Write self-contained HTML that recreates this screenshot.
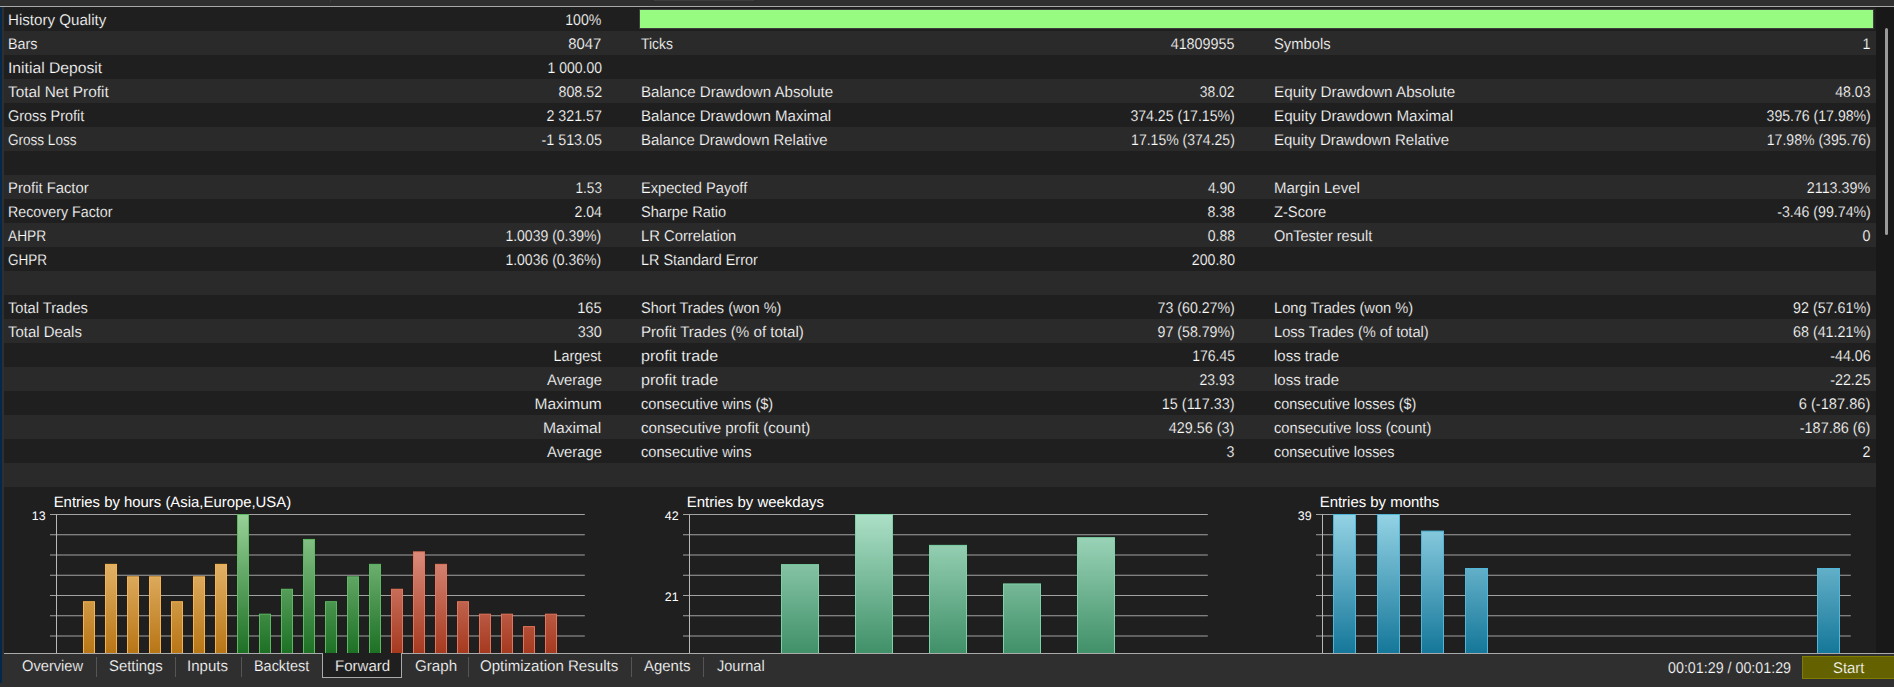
<!DOCTYPE html>
<html lang="en"><head><meta charset="utf-8"><title>Strategy Tester - Forward</title>
<style>
html,body{margin:0;padding:0;background:#2f2f2f;}
body{width:1894px;height:687px;position:relative;overflow:hidden;font-family:"Liberation Sans",Arial,sans-serif;font-size:15.4px;color:#fff;text-rendering:geometricPrecision;}
.abs{position:absolute;}
.row{position:absolute;left:4px;width:1872px;height:24px;}
.t{position:absolute;white-space:pre;transform-origin:0 0;line-height:24px;height:24px;top:2px;}
.v{transform-origin:100% 0;}
.tab{position:absolute;transform-origin:0 0;-webkit-text-stroke:0.2px #2f2f2f;top:655px;height:24px;line-height:24px;white-space:pre;}
.sep{position:absolute;top:657px;width:1px;height:20px;background:#555;}
svg text{font-family:"Liberation Sans",Arial,sans-serif;fill:#fff;}
</style></head><body>

<div class="abs" style="left:0;top:0;width:1894px;height:6px;background:#2f2f2f"></div>
<div class="abs" style="left:654px;top:0;width:100px;height:1px;background:#3e3e3e"></div>
<div class="abs" style="left:330px;top:0;width:1px;height:2px;background:#3c3c3c"></div>
<div class="abs" style="left:0;top:6px;width:1894px;height:1px;background:#a8a8a8"></div>
<div class="abs" style="left:0;top:7px;width:2px;height:676px;background:#04284a"></div>
<div class="abs" style="left:2px;top:7px;width:2px;height:646px;background:#2f2f2f"></div>
<div class="abs" style="left:4px;top:7px;width:1872px;height:646px;background:#1f1f1f"></div>
<div class="abs" style="left:1876px;top:7px;width:18px;height:646px;background:#181818"></div>
<div class="abs" style="left:1885px;top:28px;width:3px;height:207px;background:#9a9a9a;border-radius:1.5px"></div>
<div class="row" style="top:7px;background:#1f1f1f;-webkit-text-stroke:0.2px #1f1f1f">
<span class="t" id="t0_0" style="left:3.7px;transform:scaleX(0.9823)">History Quality</span>
<span class="t v" id="t0_1" style="right:1274.3px;transform:scaleX(0.9175)">100%</span>
<div class="abs" style="left:635px;top:2px;width:1235px;height:20px;background:#3e3e3e"></div>
<div class="abs" style="left:636px;top:3px;width:1233px;height:18px;background:#96fb80"></div>
</div>
<div class="row" style="top:31px;background:#2a2a2a;-webkit-text-stroke:0.2px #2a2a2a">
<span class="t" id="t1_0" style="left:3.7px;transform:scaleX(0.9295)">Bars</span>
<span class="t v" id="t1_1" style="right:1274.3px;transform:scaleX(0.9621)">8047</span>
<span class="t" id="t1_2" style="left:636.7px;transform:scaleX(0.9043)">Ticks</span>
<span class="t v" id="t1_3" style="right:641.4px;transform:scaleX(0.9319)">41809955</span>
<span class="t" id="t1_4" style="left:1269.7px;transform:scaleX(0.9585)">Symbols</span>
<span class="t v" id="t1_5" style="right:5.5px;transform:scaleX(0.9300)">1</span>
</div>
<div class="row" style="top:55px;background:#1f1f1f;-webkit-text-stroke:0.2px #1f1f1f">
<span class="t" id="t2_0" style="left:3.7px;transform:scaleX(1.0193)">Initial Deposit</span>
<span class="t v" id="t2_1" style="right:1274.3px;transform:scaleX(0.9070)">1 000.00</span>
</div>
<div class="row" style="top:79px;background:#2a2a2a;-webkit-text-stroke:0.2px #2a2a2a">
<span class="t" id="t3_0" style="left:3.7px;transform:scaleX(0.9975)">Total Net Profit</span>
<span class="t v" id="t3_1" style="right:1274.3px;transform:scaleX(0.9257)">808.52</span>
<span class="t" id="t3_2" style="left:636.7px;transform:scaleX(0.9808)">Balance Drawdown Absolute</span>
<span class="t v" id="t3_3" style="right:641.4px;transform:scaleX(0.9020)">38.02</span>
<span class="t" id="t3_4" style="left:1269.7px;transform:scaleX(0.9901)">Equity Drawdown Absolute</span>
<span class="t v" id="t3_5" style="right:5.5px;transform:scaleX(0.9159)">48.03</span>
</div>
<div class="row" style="top:103px;background:#1f1f1f;-webkit-text-stroke:0.2px #1f1f1f">
<span class="t" id="t4_0" style="left:3.7px;transform:scaleX(0.9396)">Gross Profit</span>
<span class="t v" id="t4_1" style="right:1274.3px;transform:scaleX(0.9256)">2 321.57</span>
<span class="t" id="t4_2" style="left:636.7px;transform:scaleX(0.9792)">Balance Drawdown Maximal</span>
<span class="t v" id="t4_3" style="right:641.4px;transform:scaleX(0.9176)">374.25 (17.15%)</span>
<span class="t" id="t4_4" style="left:1269.7px;transform:scaleX(0.9872)">Equity Drawdown Maximal</span>
<span class="t v" id="t4_5" style="right:5.5px;transform:scaleX(0.9162)">395.76 (17.98%)</span>
</div>
<div class="row" style="top:127px;background:#2a2a2a;-webkit-text-stroke:0.2px #2a2a2a">
<span class="t" id="t5_0" style="left:3.7px;transform:scaleX(0.8796)">Gross Loss</span>
<span class="t v" id="t5_1" style="right:1274.3px;transform:scaleX(0.9319)">-1 513.05</span>
<span class="t" id="t5_2" style="left:636.7px;transform:scaleX(0.9685)">Balance Drawdown Relative</span>
<span class="t v" id="t5_3" style="right:641.4px;transform:scaleX(0.9114)">17.15% (374.25)</span>
<span class="t" id="t5_4" style="left:1269.7px;transform:scaleX(0.9751)">Equity Drawdown Relative</span>
<span class="t v" id="t5_5" style="right:5.5px;transform:scaleX(0.9141)">17.98% (395.76)</span>
</div>
<div class="row" style="top:151px;background:#1f1f1f;-webkit-text-stroke:0.2px #1f1f1f">
</div>
<div class="row" style="top:175px;background:#2a2a2a;-webkit-text-stroke:0.2px #2a2a2a">
<span class="t" id="t7_0" style="left:3.7px;transform:scaleX(0.9623)">Profit Factor</span>
<span class="t v" id="t7_1" style="right:1274.3px;transform:scaleX(0.8850)">1.53</span>
<span class="t" id="t7_2" style="left:636.7px;transform:scaleX(0.9502)">Expected Payoff</span>
<span class="t v" id="t7_3" style="right:641.4px;transform:scaleX(0.9035)">4.90</span>
<span class="t" id="t7_4" style="left:1269.7px;transform:scaleX(0.9743)">Margin Level</span>
<span class="t v" id="t7_5" style="right:5.5px;transform:scaleX(0.9296)">2113.39%</span>
</div>
<div class="row" style="top:199px;background:#1f1f1f;-webkit-text-stroke:0.2px #1f1f1f">
<span class="t" id="t8_0" style="left:3.7px;transform:scaleX(0.9252)">Recovery Factor</span>
<span class="t v" id="t8_1" style="right:1274.3px;transform:scaleX(0.9149)">2.04</span>
<span class="t" id="t8_2" style="left:636.7px;transform:scaleX(0.9487)">Sharpe Ratio</span>
<span class="t v" id="t8_3" style="right:641.4px;transform:scaleX(0.9178)">8.38</span>
<span class="t" id="t8_4" style="left:1269.7px;transform:scaleX(0.9533)">Z-Score</span>
<span class="t v" id="t8_5" style="right:5.5px;transform:scaleX(0.9197)">-3.46 (99.74%)</span>
</div>
<div class="row" style="top:223px;background:#2a2a2a;-webkit-text-stroke:0.2px #2a2a2a">
<span class="t" id="t9_0" style="left:3.7px;transform:scaleX(0.8929)">AHPR</span>
<span class="t v" id="t9_1" style="right:1274.3px;transform:scaleX(0.9108)">1.0039 (0.39%)</span>
<span class="t" id="t9_2" style="left:636.7px;transform:scaleX(0.9608)">LR Correlation</span>
<span class="t v" id="t9_3" style="right:641.4px;transform:scaleX(0.9096)">0.88</span>
<span class="t" id="t9_4" style="left:1269.7px;transform:scaleX(0.9406)">OnTester result</span>
<span class="t v" id="t9_5" style="right:5.5px;transform:scaleX(0.9300)">0</span>
</div>
<div class="row" style="top:247px;background:#1f1f1f;-webkit-text-stroke:0.2px #1f1f1f">
<span class="t" id="t10_0" style="left:3.7px;transform:scaleX(0.8781)">GHPR</span>
<span class="t v" id="t10_1" style="right:1274.3px;transform:scaleX(0.9108)">1.0036 (0.36%)</span>
<span class="t" id="t10_2" style="left:636.7px;transform:scaleX(0.9348)">LR Standard Error</span>
<span class="t v" id="t10_3" style="right:641.4px;transform:scaleX(0.9180)">200.80</span>
</div>
<div class="row" style="top:271px;background:#2a2a2a;-webkit-text-stroke:0.2px #2a2a2a">
</div>
<div class="row" style="top:295px;background:#1f1f1f;-webkit-text-stroke:0.2px #1f1f1f">
<span class="t" id="t12_0" style="left:3.7px;transform:scaleX(0.9536)">Total Trades</span>
<span class="t v" id="t12_1" style="right:1274.3px;transform:scaleX(0.9540)">165</span>
<span class="t" id="t12_2" style="left:636.7px;transform:scaleX(0.9435)">Short Trades (won %)</span>
<span class="t v" id="t12_3" style="right:641.4px;transform:scaleX(0.9216)">73 (60.27%)</span>
<span class="t" id="t12_4" style="left:1269.7px;transform:scaleX(0.9514)">Long Trades (won %)</span>
<span class="t v" id="t12_5" style="right:5.5px;transform:scaleX(0.9276)">92 (57.61%)</span>
</div>
<div class="row" style="top:319px;background:#2a2a2a;-webkit-text-stroke:0.2px #2a2a2a">
<span class="t" id="t13_0" style="left:3.7px;transform:scaleX(0.9707)">Total Deals</span>
<span class="t v" id="t13_1" style="right:1274.3px;transform:scaleX(0.9348)">330</span>
<span class="t" id="t13_2" style="left:636.7px;transform:scaleX(0.9814)">Profit Trades (% of total)</span>
<span class="t v" id="t13_3" style="right:641.4px;transform:scaleX(0.9216)">97 (58.79%)</span>
<span class="t" id="t13_4" style="left:1269.7px;transform:scaleX(0.9520)">Loss Trades (% of total)</span>
<span class="t v" id="t13_5" style="right:5.5px;transform:scaleX(0.9276)">68 (41.21%)</span>
</div>
<div class="row" style="top:343px;background:#1f1f1f;-webkit-text-stroke:0.2px #1f1f1f">
<span class="t v" id="t14_1" style="right:1274.3px;transform:scaleX(0.9340)">Largest</span>
<span class="t" id="t14_2" style="left:636.7px;transform:scaleX(1.0479)">profit trade</span>
<span class="t v" id="t14_3" style="right:641.4px;transform:scaleX(0.9094)">176.45</span>
<span class="t" id="t14_4" style="left:1269.7px;transform:scaleX(0.9738)">loss trade</span>
<span class="t v" id="t14_5" style="right:5.5px;transform:scaleX(0.9242)">-44.06</span>
</div>
<div class="row" style="top:367px;background:#2a2a2a;-webkit-text-stroke:0.2px #2a2a2a">
<span class="t v" id="t15_1" style="right:1274.3px;transform:scaleX(0.9645)">Average</span>
<span class="t" id="t15_2" style="left:636.7px;transform:scaleX(1.0479)">profit trade</span>
<span class="t v" id="t15_3" style="right:641.4px;transform:scaleX(0.9107)">23.93</span>
<span class="t" id="t15_4" style="left:1269.7px;transform:scaleX(0.9738)">loss trade</span>
<span class="t v" id="t15_5" style="right:5.5px;transform:scaleX(0.9242)">-22.25</span>
</div>
<div class="row" style="top:391px;background:#1f1f1f;-webkit-text-stroke:0.2px #1f1f1f">
<span class="t v" id="t16_1" style="right:1274.3px;transform:scaleX(1.0078)">Maximum</span>
<span class="t" id="t16_2" style="left:636.7px;transform:scaleX(0.9483)">consecutive wins ($)</span>
<span class="t v" id="t16_3" style="right:641.4px;transform:scaleX(0.9385)">15 (117.33)</span>
<span class="t" id="t16_4" style="left:1269.7px;transform:scaleX(0.9343)">consecutive losses ($)</span>
<span class="t v" id="t16_5" style="right:5.5px;transform:scaleX(0.9492)">6 (-187.86)</span>
</div>
<div class="row" style="top:415px;background:#2a2a2a;-webkit-text-stroke:0.2px #2a2a2a">
<span class="t v" id="t17_1" style="right:1274.3px;transform:scaleX(1.0181)">Maximal</span>
<span class="t" id="t17_2" style="left:636.7px;transform:scaleX(0.9853)">consecutive profit (count)</span>
<span class="t v" id="t17_3" style="right:641.4px;transform:scaleX(0.9319)">429.56 (3)</span>
<span class="t" id="t17_4" style="left:1269.7px;transform:scaleX(0.9527)">consecutive loss (count)</span>
<span class="t v" id="t17_5" style="right:5.5px;transform:scaleX(0.9362)">-187.86 (6)</span>
</div>
<div class="row" style="top:439px;background:#1f1f1f;-webkit-text-stroke:0.2px #1f1f1f">
<span class="t v" id="t18_1" style="right:1274.3px;transform:scaleX(0.9645)">Average</span>
<span class="t" id="t18_2" style="left:636.7px;transform:scaleX(0.9501)">consecutive wins</span>
<span class="t v" id="t18_3" style="right:641.4px;transform:scaleX(0.9300)">3</span>
<span class="t" id="t18_4" style="left:1269.7px;transform:scaleX(0.9326)">consecutive losses</span>
<span class="t v" id="t18_5" style="right:5.5px;transform:scaleX(0.9300)">2</span>
</div>
<div class="row" style="top:463px;background:#2a2a2a;-webkit-text-stroke:0.2px #2a2a2a">
</div>
<svg class="abs" style="left:0;top:487px" width="1876" height="166" viewBox="0 487 1876 166">
<defs>
<linearGradient id="go" gradientUnits="userSpaceOnUse" x1="0" y1="514" x2="0" y2="676"><stop offset="0" stop-color="#fbd394"/><stop offset="1" stop-color="#ac6600"/></linearGradient>
<linearGradient id="gg" gradientUnits="userSpaceOnUse" x1="0" y1="514" x2="0" y2="676"><stop offset="0" stop-color="#98d298"/><stop offset="1" stop-color="#086011"/></linearGradient>
<linearGradient id="gr" gradientUnits="userSpaceOnUse" x1="0" y1="514" x2="0" y2="676"><stop offset="0" stop-color="#efa99d"/><stop offset="1" stop-color="#99270a"/></linearGradient>
<linearGradient id="gm" gradientUnits="userSpaceOnUse" x1="0" y1="514" x2="0" y2="676"><stop offset="0" stop-color="#ace0c7"/><stop offset="1" stop-color="#2e8359"/></linearGradient>
<linearGradient id="gb" gradientUnits="userSpaceOnUse" x1="0" y1="514" x2="0" y2="676"><stop offset="0" stop-color="#94d3e5"/><stop offset="1" stop-color="#00688d"/></linearGradient>
</defs>
<line x1="50" x2="584.8" y1="514.50" y2="514.50" stroke="#a2a2a2" stroke-width="1"/>
<line x1="50" x2="584.8" y1="534.75" y2="534.75" stroke="#a2a2a2" stroke-width="1"/>
<line x1="50" x2="584.8" y1="555.00" y2="555.00" stroke="#a2a2a2" stroke-width="1"/>
<line x1="50" x2="584.8" y1="575.25" y2="575.25" stroke="#a2a2a2" stroke-width="1"/>
<line x1="50" x2="584.8" y1="595.50" y2="595.50" stroke="#a2a2a2" stroke-width="1"/>
<line x1="50" x2="584.8" y1="615.75" y2="615.75" stroke="#a2a2a2" stroke-width="1"/>
<line x1="50" x2="584.8" y1="636.00" y2="636.00" stroke="#a2a2a2" stroke-width="1"/>
<line x1="50" x2="584.8" y1="656.25" y2="656.25" stroke="#a2a2a2" stroke-width="1"/>
<line x1="56.5" x2="56.5" y1="514.5" y2="660" stroke="#b8b8b8" stroke-width="1"/>
<rect x="83.5" y="601.73" width="11" height="98.77" fill="url(#go)" stroke="#f8b44c" stroke-width="1"/>
<rect x="105.5" y="564.35" width="11" height="136.15" fill="url(#go)" stroke="#f8b44c" stroke-width="1"/>
<rect x="127.5" y="576.81" width="11" height="123.69" fill="url(#go)" stroke="#f8b44c" stroke-width="1"/>
<rect x="149.5" y="576.81" width="11" height="123.69" fill="url(#go)" stroke="#f8b44c" stroke-width="1"/>
<rect x="171.5" y="601.73" width="11" height="98.77" fill="url(#go)" stroke="#f8b44c" stroke-width="1"/>
<rect x="193.5" y="576.81" width="11" height="123.69" fill="url(#go)" stroke="#f8b44c" stroke-width="1"/>
<rect x="215.5" y="564.35" width="11" height="136.15" fill="url(#go)" stroke="#f8b44c" stroke-width="1"/>
<rect x="237.5" y="514.50" width="11" height="186.00" fill="url(#gg)" stroke="#5cba60" stroke-width="1"/>
<rect x="259.5" y="614.19" width="11" height="86.31" fill="url(#gg)" stroke="#5cba60" stroke-width="1"/>
<rect x="281.5" y="589.27" width="11" height="111.23" fill="url(#gg)" stroke="#5cba60" stroke-width="1"/>
<rect x="303.5" y="539.42" width="11" height="161.08" fill="url(#gg)" stroke="#5cba60" stroke-width="1"/>
<rect x="325.5" y="601.73" width="11" height="98.77" fill="url(#gg)" stroke="#5cba60" stroke-width="1"/>
<rect x="347.5" y="576.81" width="11" height="123.69" fill="url(#gg)" stroke="#5cba60" stroke-width="1"/>
<rect x="369.5" y="564.35" width="11" height="136.15" fill="url(#gg)" stroke="#5cba60" stroke-width="1"/>
<rect x="391.5" y="589.27" width="11" height="111.23" fill="url(#gr)" stroke="#e4755a" stroke-width="1"/>
<rect x="413.5" y="551.88" width="11" height="148.62" fill="url(#gr)" stroke="#e4755a" stroke-width="1"/>
<rect x="435.5" y="564.35" width="11" height="136.15" fill="url(#gr)" stroke="#e4755a" stroke-width="1"/>
<rect x="457.5" y="601.73" width="11" height="98.77" fill="url(#gr)" stroke="#e4755a" stroke-width="1"/>
<rect x="479.5" y="614.19" width="11" height="86.31" fill="url(#gr)" stroke="#e4755a" stroke-width="1"/>
<rect x="501.5" y="614.19" width="11" height="86.31" fill="url(#gr)" stroke="#e4755a" stroke-width="1"/>
<rect x="523.5" y="626.65" width="11" height="73.85" fill="url(#gr)" stroke="#e4755a" stroke-width="1"/>
<rect x="545.5" y="614.19" width="11" height="86.31" fill="url(#gr)" stroke="#e4755a" stroke-width="1"/>
<rect x="567.5" y="664.04" width="11" height="36.46" fill="url(#gr)" stroke="#e4755a" stroke-width="1"/>
<text x="53.7" y="507" font-size="15" textLength="237.5" lengthAdjust="spacingAndGlyphs">Entries by hours (Asia,Europe,USA)</text>
<text x="45.6" y="520" font-size="12.4" text-anchor="end">13</text>
<line x1="683" x2="1207.8" y1="514.50" y2="514.50" stroke="#a2a2a2" stroke-width="1"/>
<line x1="683" x2="1207.8" y1="534.75" y2="534.75" stroke="#a2a2a2" stroke-width="1"/>
<line x1="683" x2="1207.8" y1="555.00" y2="555.00" stroke="#a2a2a2" stroke-width="1"/>
<line x1="683" x2="1207.8" y1="575.25" y2="575.25" stroke="#a2a2a2" stroke-width="1"/>
<line x1="683" x2="1207.8" y1="595.50" y2="595.50" stroke="#a2a2a2" stroke-width="1"/>
<line x1="683" x2="1207.8" y1="615.75" y2="615.75" stroke="#a2a2a2" stroke-width="1"/>
<line x1="683" x2="1207.8" y1="636.00" y2="636.00" stroke="#a2a2a2" stroke-width="1"/>
<line x1="683" x2="1207.8" y1="656.25" y2="656.25" stroke="#a2a2a2" stroke-width="1"/>
<line x1="689.5" x2="689.5" y1="514.5" y2="660" stroke="#b8b8b8" stroke-width="1"/>
<rect x="781.5" y="564.64" width="37" height="135.86" fill="url(#gm)" stroke="#7cd2a4" stroke-width="1"/>
<rect x="855.5" y="514.50" width="37" height="186.00" fill="url(#gm)" stroke="#7cd2a4" stroke-width="1"/>
<rect x="929.5" y="545.36" width="37" height="155.14" fill="url(#gm)" stroke="#7cd2a4" stroke-width="1"/>
<rect x="1003.5" y="583.93" width="37" height="116.57" fill="url(#gm)" stroke="#7cd2a4" stroke-width="1"/>
<rect x="1077.5" y="537.64" width="37" height="162.86" fill="url(#gm)" stroke="#7cd2a4" stroke-width="1"/>
<text x="686.7" y="507" font-size="15" textLength="137.3" lengthAdjust="spacingAndGlyphs">Entries by weekdays</text>
<text x="678.6" y="520" font-size="12.4" text-anchor="end">42</text>
<text x="678.6" y="601.0" font-size="12.4" text-anchor="end">21</text>
<line x1="1316" x2="1850.8" y1="514.50" y2="514.50" stroke="#a2a2a2" stroke-width="1"/>
<line x1="1316" x2="1850.8" y1="534.75" y2="534.75" stroke="#a2a2a2" stroke-width="1"/>
<line x1="1316" x2="1850.8" y1="555.00" y2="555.00" stroke="#a2a2a2" stroke-width="1"/>
<line x1="1316" x2="1850.8" y1="575.25" y2="575.25" stroke="#a2a2a2" stroke-width="1"/>
<line x1="1316" x2="1850.8" y1="595.50" y2="595.50" stroke="#a2a2a2" stroke-width="1"/>
<line x1="1316" x2="1850.8" y1="615.75" y2="615.75" stroke="#a2a2a2" stroke-width="1"/>
<line x1="1316" x2="1850.8" y1="636.00" y2="636.00" stroke="#a2a2a2" stroke-width="1"/>
<line x1="1316" x2="1850.8" y1="656.25" y2="656.25" stroke="#a2a2a2" stroke-width="1"/>
<line x1="1322.5" x2="1322.5" y1="514.5" y2="660" stroke="#b8b8b8" stroke-width="1"/>
<rect x="1333.5" y="514.50" width="22" height="186.00" fill="url(#gb)" stroke="#50b6da" stroke-width="1"/>
<rect x="1377.5" y="514.50" width="22" height="186.00" fill="url(#gb)" stroke="#50b6da" stroke-width="1"/>
<rect x="1421.5" y="531.12" width="22" height="169.38" fill="url(#gb)" stroke="#50b6da" stroke-width="1"/>
<rect x="1465.5" y="568.50" width="22" height="132.00" fill="url(#gb)" stroke="#50b6da" stroke-width="1"/>
<rect x="1817.5" y="568.50" width="22" height="132.00" fill="url(#gb)" stroke="#50b6da" stroke-width="1"/>
<text x="1319.7" y="507" font-size="15" textLength="119.5" lengthAdjust="spacingAndGlyphs">Entries by months</text>
<text x="1311.6" y="520" font-size="12.4" text-anchor="end">39</text>
</svg>
<div class="abs" style="left:0;top:653px;width:1894px;height:34px;background:#2f2f2f"></div>
<div class="abs" style="left:0;top:653px;width:2px;height:30px;background:#04284a"></div>
<div class="abs" style="left:4px;top:653px;width:1890px;height:1px;background:#aaaaaa"></div>
<div class="abs" style="left:322px;top:653px;width:80px;height:25px;box-sizing:border-box;background:#1f1f1f;border:1px solid #aaaaaa;border-top:none"></div>
<span class="tab" id="tab_Overview" style="left:22.35px;transform:scaleX(0.9527)">Overview</span>
<span class="tab" id="tab_Settings" style="left:108.85px;transform:scaleX(0.9658)">Settings</span>
<span class="tab" id="tab_Inputs" style="left:187.35px;transform:scaleX(0.9764)">Inputs</span>
<span class="tab" id="tab_Backtest" style="left:253.60px;transform:scaleX(0.9376)">Backtest</span>
<span class="tab" id="tab_Forward" style="-webkit-text-stroke-color:#1f1f1f;left:334.60px;transform:scaleX(0.9770)">Forward</span>
<span class="tab" id="tab_Graph" style="left:414.85px;transform:scaleX(0.9830)">Graph</span>
<span class="tab" id="tab_Optimization_Results" style="left:480.35px;transform:scaleX(0.9796)">Optimization Results</span>
<span class="tab" id="tab_Agents" style="left:644.10px;transform:scaleX(0.9704)">Agents</span>
<span class="tab" id="tab_Journal" style="left:716.60px;transform:scaleX(0.9442)">Journal</span>
<div class="sep" style="left:96px"></div>
<div class="sep" style="left:175px"></div>
<div class="sep" style="left:241px"></div>
<div class="sep" style="left:468px"></div>
<div class="sep" style="left:631px"></div>
<div class="sep" style="left:703px"></div>
<span class="tab" id="timer" style="left:1667.85px;top:657px;transform:scaleX(0.9276)">00:01:29 / 00:01:29</span>
<div class="abs" style="left:1802px;top:656px;width:92px;height:23px;box-sizing:border-box;background:#636100;border:1px solid #807c00;border-right:none"></div>
<span class="tab" id="start" style="-webkit-text-stroke-color:#636100;left:1832.75px;top:657px;transform:scaleX(0.9655)">Start</span>
</body></html>
